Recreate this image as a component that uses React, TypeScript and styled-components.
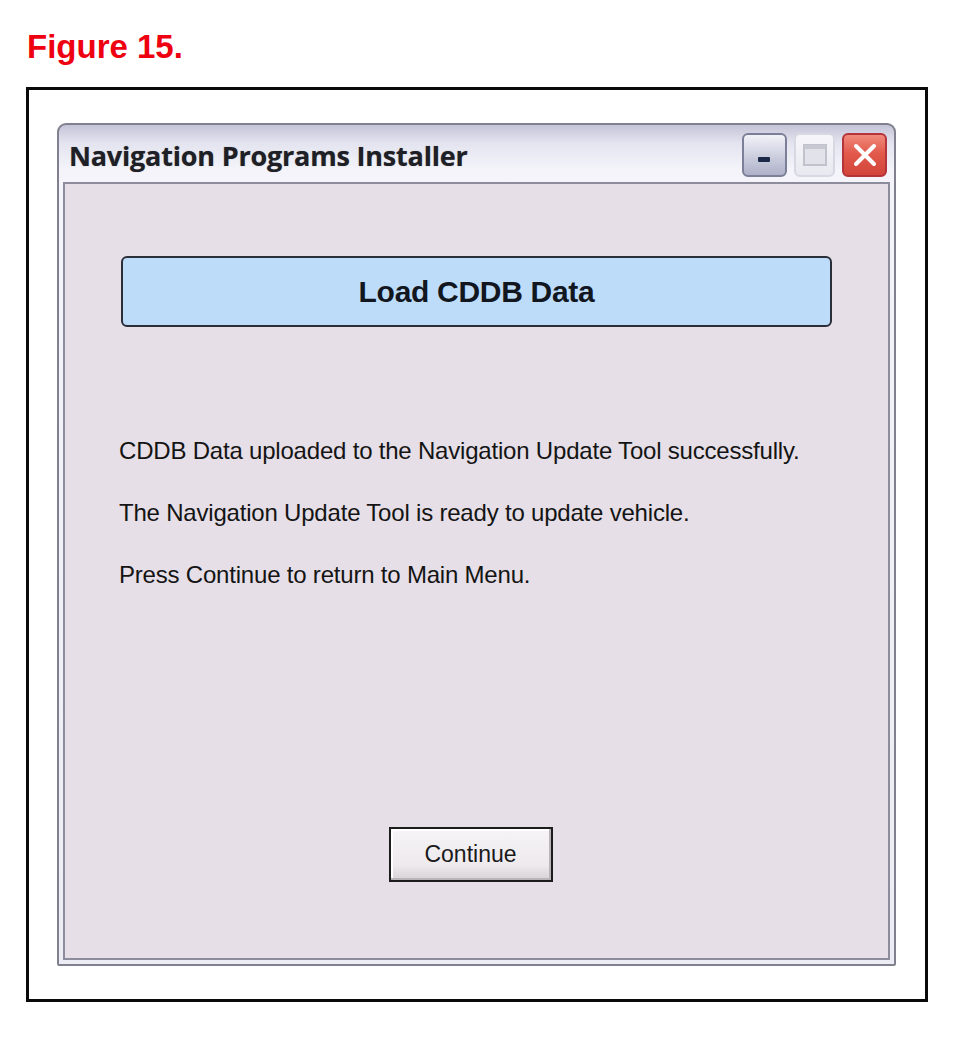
import styled, { createGlobalStyle } from "styled-components";

const GlobalStyle = createGlobalStyle`
  html, body {
    margin: 0;
    padding: 0;
    background: #ffffff;
  }
`;

const Page = styled.div`
  width: 961px;
  height: 1041px;
  padding-top: 27px;
  box-sizing: border-box;
  font-family: "Liberation Sans", Arial, sans-serif;
`;

const Caption = styled.h1`
  margin: 0 0 0 27px;
  height: 60px;
  font-size: 33px;
  line-height: 40px;
  font-weight: 700;
  color: #ee0010;
`;

const Frame = styled.div`
  margin-left: 26px;
  width: 902px;
  height: 915px;
  box-sizing: border-box;
  border: 3px solid #0a0a0a;
  padding: 33px 0 0 28px;
`;

const Window = styled.div`
  width: 839px;
  height: 843px;
  box-sizing: border-box;
  display: flex;
  flex-direction: column;
  border: 2px solid #80808e;
  border-radius: 9px 9px 2px 2px;
  background: linear-gradient(180deg, #c4c4d8 0px, #e4e4f0 18px, #f4f4fa 45px, #ececf4 100%);
  padding: 0 4px 4px 4px;
`;

const TitleBar = styled.div`
  height: 57px;
  display: flex;
  align-items: center;
  justify-content: space-between;
  padding: 0 3px 0 6px;
`;

const Title = styled.div`
  font-family: "Open Sans", "DejaVu Sans", sans-serif;
  font-weight: 700;
  font-size: 27px;
  letter-spacing: -0.2px;
  color: #1e2026;
  padding-top: 3px;
  text-shadow: 0 0 1px rgba(0, 0, 0, 0.35);
`;

const Controls = styled.div`
  display: flex;
  gap: 7px;
  padding-top: 2px;
`;

const CtrlButton = styled.div<{ $kind: "min" | "max" | "close" }>`
  width: ${(p) => (p.$kind === "max" ? "41px" : "45px")};
  height: 44px;
  box-sizing: border-box;
  border-radius: 6px;
  display: flex;
  align-items: center;
  justify-content: center;
  border: 2px solid
    ${(p) => (p.$kind === "close" ? "#b5343a" : p.$kind === "max" ? "#d8d8e2" : "#7b7f98")};
  background: ${(p) =>
    p.$kind === "close"
      ? "linear-gradient(180deg, #f08a7c 0%, #e25a4c 45%, #d2443a 100%)"
      : p.$kind === "max"
      ? "linear-gradient(180deg, #f6f6fa 0%, #e8e8f0 100%)"
      : "linear-gradient(180deg, #f2f2f8 0%, #c8cadc 60%, #aeb1c8 100%)"};
`;

const Client = styled.div`
  flex: 1;
  display: flex;
  flex-direction: column;
  background: #e6dfe7;
  border: 2px solid #8c8c9c;
  padding: 72px 54px 76px 54px;
`;

const Banner = styled.div`
  height: 71px;
  box-sizing: border-box;
  display: flex;
  align-items: center;
  justify-content: center;
  background: #bcdcfa;
  border: 2px solid #2a2e38;
  border-radius: 6px;
  font-size: 30px;
  font-weight: 700;
  letter-spacing: -0.3px;
  color: #12161e;
  margin: 0 2px;
`;

const Messages = styled.div`
  margin-top: 111px;
  display: flex;
  flex-direction: column;
  gap: 37px;
`;

const Message = styled.p`
  margin: 0;
  font-size: 24px;
  line-height: 25px;
  color: #141414;
  letter-spacing: -0.2px;
`;

const Footer = styled.div`
  margin-top: auto;
  display: flex;
  justify-content: center;
  padding-right: 12px;
`;

const ContinueButton = styled.button`
  width: 164px;
  height: 55px;
  box-sizing: border-box;
  border: 2px solid #1c1c1c;
  background: linear-gradient(180deg, #f6f4f6 0%, #eeeaee 70%, #d6d2d6 100%);
  box-shadow: inset -2px -2px 0 #b8b4b8, inset 2px 2px 0 #ffffff;
  font-family: "Liberation Sans", Arial, sans-serif;
  font-size: 23px;
  color: #1a1a1a;
  padding: 0;
`;

const MinIcon = () => (
  <svg width="20" height="20" viewBox="0 0 20 20">
    <rect x="3" y="12" width="12" height="5" rx="1" fill="#1c2a4a" />
  </svg>
);

const MaxIcon = () => (
  <svg width="28" height="26" viewBox="0 0 28 26">
    <rect x="3" y="3" width="22" height="20" fill="#e2e2ea" stroke="#c2c2cc" strokeWidth="2" />
    <rect x="3" y="3" width="22" height="4" fill="#c8c8d2" />
  </svg>
);

const CloseIcon = () => (
  <svg width="30" height="30" viewBox="0 0 30 30">
    <path d="M6 6 L24 24 M24 6 L6 24" stroke="#ffffff" strokeWidth="4" strokeLinecap="round" />
  </svg>
);

export default function App() {
  return (
    <Page>
      <GlobalStyle />
      <Caption>Figure 15.</Caption>
      <Frame>
        <Window>
          <TitleBar>
            <Title>Navigation Programs Installer</Title>
            <Controls>
              <CtrlButton $kind="min">
                <MinIcon />
              </CtrlButton>
              <CtrlButton $kind="max">
                <MaxIcon />
              </CtrlButton>
              <CtrlButton $kind="close">
                <CloseIcon />
              </CtrlButton>
            </Controls>
          </TitleBar>
          <Client>
            <Banner>Load CDDB Data</Banner>
            <Messages>
              <Message>CDDB Data uploaded to the Navigation Update Tool successfully.</Message>
              <Message>The Navigation Update Tool is ready to update vehicle.</Message>
              <Message>Press Continue to return to Main Menu.</Message>
            </Messages>
            <Footer>
              <ContinueButton>Continue</ContinueButton>
            </Footer>
          </Client>
        </Window>
      </Frame>
    </Page>
  );
}
